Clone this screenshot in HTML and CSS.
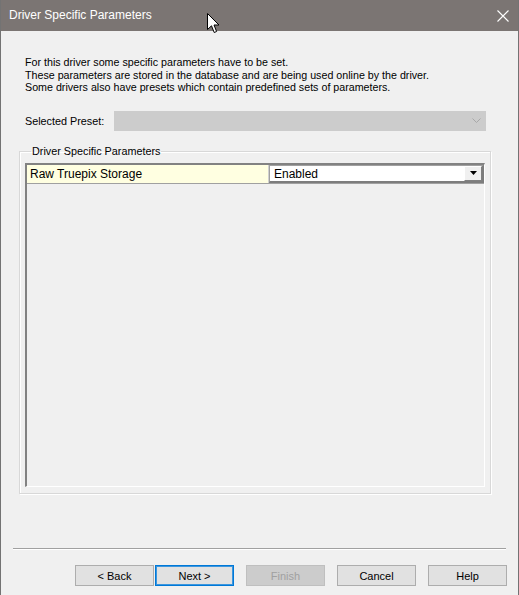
FILE: index.html
```html
<!DOCTYPE html>
<html lang="en">
<head>
  <meta charset="UTF-8">
  <title>Driver Specific Parameters</title>
  <link rel="stylesheet" href="styles.css">
</head>
<body>
  <div class="window">
    <div class="titlebar">
      <span class="title">Driver Specific Parameters</span>
      <svg class="close" width="12" height="12" viewBox="0 0 12 12">
        <path d="M0.5 0.5 L11.5 11.5 M11.5 0.5 L0.5 11.5" stroke="#fff" stroke-width="1.1" fill="none"/>
      </svg>
    </div>

    <div class="content">
      <p class="intro">
        For this driver some specific parameters have to be set.<br>
        These parameters are stored in the database and are being used online by the driver.<br>
        Some drivers also have presets which contain predefined sets of parameters.
      </p>

      <div class="preset-row">
        <label class="preset-label">Selected Preset:</label>
        <div class="combo disabled">
          <svg width="9" height="5" viewBox="0 0 9 5">
            <path d="M0.5 0.5 L4.5 4.5 L8.5 0.5" stroke="#a8a8a8" fill="none"/>
          </svg>
        </div>
      </div>

      <fieldset class="group">
        <legend>Driver Specific Parameters</legend>
        <div class="grid">
          <div class="grid-row">
            <div class="cell-name">Raw Truepix Storage</div>
            <div class="cell-value">
              <span class="value-text">Enabled</span>
              <div class="drop-btn">
                <svg width="7" height="4" viewBox="0 0 7 4"><path d="M0 0 H7 L3.5 4 Z" fill="#000"/></svg>
              </div>
            </div>
          </div>
        </div>
      </fieldset>

      <div class="footer">
        <div class="separator"></div>
        <div class="buttons">
          <button class="btn back">&lt; Back</button>
          <button class="btn default">Next &gt;</button>
          <button class="btn" disabled>Finish</button>
          <button class="btn">Cancel</button>
          <button class="btn">Help</button>
        </div>
      </div>
    </div>

    <svg class="cursor" width="13" height="21" viewBox="0 0 13 21">
      <path d="M0.5 0.5 L0.5 16.5 L4.5 12.8 L7.2 19.5 L9.6 18.5 L7 12 L12 12 Z" fill="#fff" stroke="#000" stroke-width="1" stroke-linejoin="round"/>
    </svg>
  </div>
</body>
</html>
```

FILE: styles.css
```css
* {
  box-sizing: border-box;
  margin: 0;
  padding: 0;
}

body {
  font-family: 'Liberation Sans', Arial, sans-serif;
  font-size: 11px;
  color: #000;
  background: #f0f0f0;
}

.window {
  position: relative;
  width: 519px;
  height: 595px;
  display: flex;
  flex-direction: column;
  background: #f0f0f0;
  border-left: 1px solid #737373;
  border-right: 1px solid #737373;
}

.titlebar {
  height: 31px;
  flex-shrink: 0;
  background: #7b7573;
  color: #fff;
  display: flex;
  align-items: center;
  justify-content: space-between;
  padding: 0 9px 1px 8px;
  font-size: 12px;
}

.close {
  margin-top: 1px;
}

.content {
  flex: 1;
  display: flex;
  flex-direction: column;
  padding-top: 25px;
}

.intro {
  margin-left: 24px;
  font-size: 10.7px;
  line-height: 12.5px;
}

.preset-row {
  display: flex;
  align-items: center;
  margin: 17px 0 0 24px;
}

.preset-label {
  width: 89px;
  font-size: 10.8px;
}

.combo {
  width: 372px;
  height: 20px;
  display: flex;
  align-items: center;
  justify-content: flex-end;
  padding-right: 5px;
}

.combo.disabled {
  background: #cccccc;
}

.group {
  margin: 14px 27px 0 18px;
  padding: 5px 5px 6px 5px;
  border: 1px solid #d8d8d8;
  box-shadow: inset 1px 1px 0 #fff, 1px 1px 0 #fff;
}

.group legend {
  margin-left: 6px;
  padding: 0 1px;
  line-height: 13px;
  font-size: 10.8px;
}

.grid {
  height: 324px;
  border-top: 2px solid #828282;
  border-left: 2px solid #828282;
  border-right: 1px solid #fff;
  border-bottom: 1px solid #fff;
  background: #f0f0f0;
}

.grid-row {
  display: flex;
  height: 19px;
  border-bottom: 1px solid #a0a0a0;
  background: #fff;
}

.cell-name {
  width: 242px;
  background: #ffffe1;
  padding-left: 3px;
  line-height: 18px;
  font-size: 12px;
  border-right: 1px solid #d0d0d0;
}

.cell-value {
  flex: 1;
  display: flex;
  align-items: center;
  justify-content: space-between;
  padding-left: 4px;
  font-size: 12px;
  border: 1px solid #a0a0a0;
  border-right: 2px solid #7d7d7d;
  border-bottom: 2px solid #7d7d7d;
}

.value-text {
  padding-top: 2px;
}

.drop-btn {
  width: 18px;
  height: 15px;
  background: #f0f0f0;
  border: 1px solid;
  border-color: #fff #808080 #808080 #fff;
  display: flex;
  align-items: center;
  justify-content: center;
}

.footer {
  margin-top: auto;
  padding-bottom: 9px;
}

.separator {
  margin: 0 12px;
  height: 2px;
  border-top: 1px solid #a0a0a0;
  border-bottom: 1px solid #fff;
}

.buttons {
  display: flex;
  justify-content: flex-end;
  gap: 12px;
  padding-right: 11px;
  margin-top: 15px;
}

.btn {
  width: 79px;
  height: 21px;
  font-family: 'Liberation Sans', Arial, sans-serif;
  font-size: 11px;
  color: #000;
  background: #e1e1e1;
  border: 1px solid #adadad;
}

.btn.back {
  margin-right: -11px;
}

.btn.default {
  border: 1px solid #0078d7;
  box-shadow: inset 0 0 0 1px #3c96de;
}

.btn:disabled {
  background: #cccccc;
  border-color: #bfbfbf;
  color: #a0a0a0;
}

.cursor {
  position: absolute;
  left: 206px;
  top: 13px;
}
```
